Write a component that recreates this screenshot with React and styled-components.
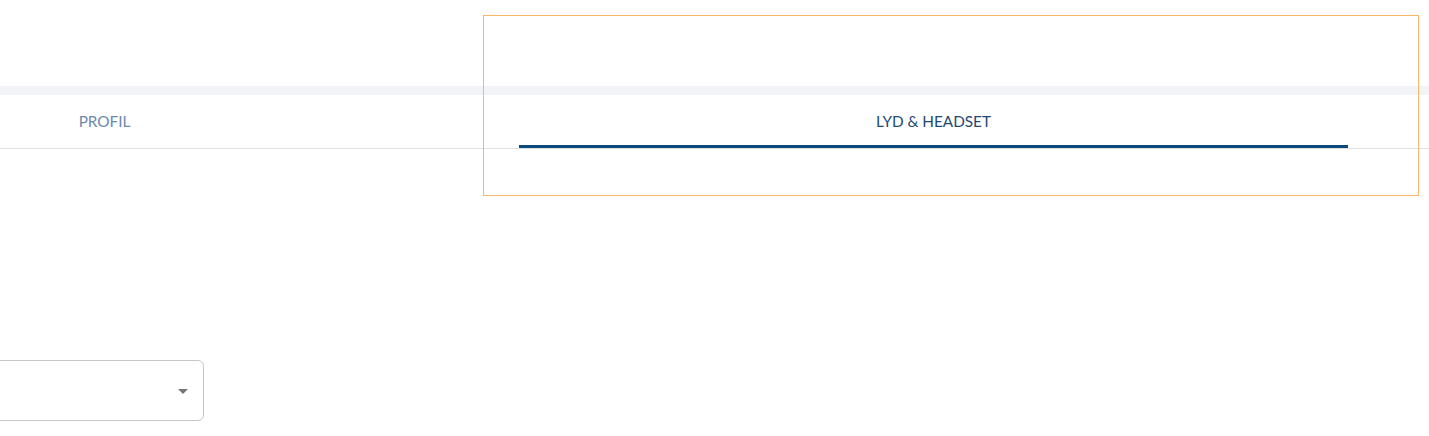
import React from 'react'
import styled, { createGlobalStyle } from 'styled-components'

const Global = createGlobalStyle`
  html, body {
    margin: 0;
    padding: 0;
    background: #ffffff;
    font-family: Lato, "Open Sans", Arial, sans-serif;
    overflow: hidden;
  }
`

const tabs = [
  { id: 'profil', label: 'PROFIL' },
  { id: 'lyd', label: 'LYD & HEADSET' },
]

const App = () => {
  return (
    <>
      <Global />
      <Page>
        <Header />
        <Band />
        <TabBar>
          <TabRow>
            {tabs.map((t) => (
              <Tab key={t.id} active={t.id === 'lyd'}>
                {t.label}
              </Tab>
            ))}
          </TabRow>
        </TabBar>
        <Body>
          <Select>
            <Caret />
          </Select>
        </Body>
        <Highlight />
      </Page>
    </>
  )
}

export default App

const Page = styled.div`
  position: relative;
  width: 1429px;
  height: 436px;
  overflow: hidden;
`
const Highlight = styled.div`
  position: absolute;
  left: 483px;
  top: 15px;
  width: 934px;
  height: 179px;
  border: 1px solid #f8b666;
  pointer-events: none;
  z-index: 2;
`
const Header = styled.div`
  height: 86px;
`
const Band = styled.div`
  height: 9px;
  background-color: #f2f3f7;
`
const TabBar = styled.div`
  height: 53px;
  border-bottom: 1px solid #e0e0e0;
  overflow: hidden;
`
const TabRow = styled.div`
  display: flex;
  margin-left: -310px;
  height: 100%;
`
const Tab = styled.div`
  width: 829px;
  flex: none;
  display: flex;
  align-items: center;
  justify-content: center;
  box-sizing: border-box;
  padding-bottom: 1px;
  font-size: 15.3px;
  color: ${(p) => (p.active ? '#1f4a73' : '#6d89ab')};
  border-bottom: 3px solid ${(p) => (p.active ? '#0b4a7b' : 'transparent')};
  border-top: 3px solid transparent;
`
const Body = styled.div`
  padding-top: 211px;
`
const Select = styled.div`
  margin-left: -100px;
  width: 287px;
  height: 59px;
  border: 1px solid #c6c6c6;
  border-radius: 6px;
  display: flex;
  align-items: center;
  justify-content: flex-end;
  padding-right: 15px;
`
const Caret = styled.span`
  width: 0;
  height: 0;
  border-left: 5px solid transparent;
  border-right: 5px solid transparent;
  border-top: 5px solid #757575;
  margin-top: 1px;
`
